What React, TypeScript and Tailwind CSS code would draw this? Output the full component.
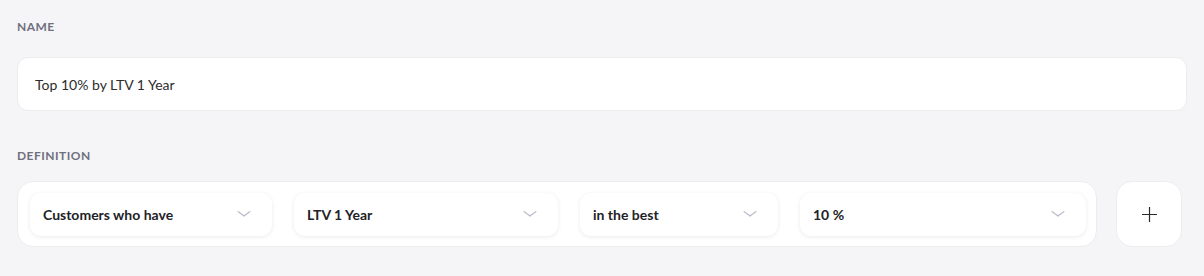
const FIELDS = [
  { label: "Customers who have", width: "w-[242px]" },
  { label: "LTV 1 Year", width: "w-[264px]" },
  { label: "in the best", width: "w-[198px]" },
  { label: "10 %", width: "flex-1" },
];

function Chevron() {
  return (
    <svg width="14" height="8" viewBox="0 0 14 8" fill="none">
      <path d="M1 1.5L7 6L13 1.5" stroke="#b9b9c6" strokeWidth="1.1" strokeLinecap="round" />
    </svg>
  );
}

export default function App() {
  return (
    <div className="h-[276px] w-full bg-[#f5f5f7] px-[17px] pt-[19px] font-['Lato',sans-serif]">
      <div className="text-[12px] font-bold leading-[15px] tracking-[0.04em] text-[#6f6f7f]">
        NAME
      </div>
      <div className="mt-[23px] flex h-[54px] items-center rounded-[11px] border border-[#ececef] bg-white pl-[17px] text-[14px] text-[#2c2c2c]">
        Top 10% by LTV 1 Year
      </div>

      <div className="mt-[37px] text-[12px] font-bold leading-[15px] tracking-[0.04em] text-[#6f6f7f]">
        DEFINITION
      </div>
      <div className="mt-[18px] flex gap-[19px]">
        <div className="flex h-[66px] w-[1080px] items-center gap-[22px] rounded-[16px] border border-[#ededf0] bg-white pl-[12px] pr-[10px]">
          {FIELDS.map((f) => (
            <div
              key={f.label}
              className={`${f.width} flex h-[43px] items-center justify-between rounded-[11px] bg-white pl-[13px] pr-[21px] shadow-[0_1px_4px_rgba(30,30,60,0.09)]`}
            >
              <span className="text-[14px] font-bold text-[#222226]">{f.label}</span>
              <Chevron />
            </div>
          ))}
        </div>
        <button className="flex h-[66px] w-[66px] items-center justify-center rounded-[16px] border border-[#ededf0] bg-white">
          <svg width="17" height="17" viewBox="0 0 17 17" fill="none">
            <path d="M8.5 1V16M1 8.5H16" stroke="#2a2a2e" strokeWidth="1.2" />
          </svg>
        </button>
      </div>
    </div>
  );
}
